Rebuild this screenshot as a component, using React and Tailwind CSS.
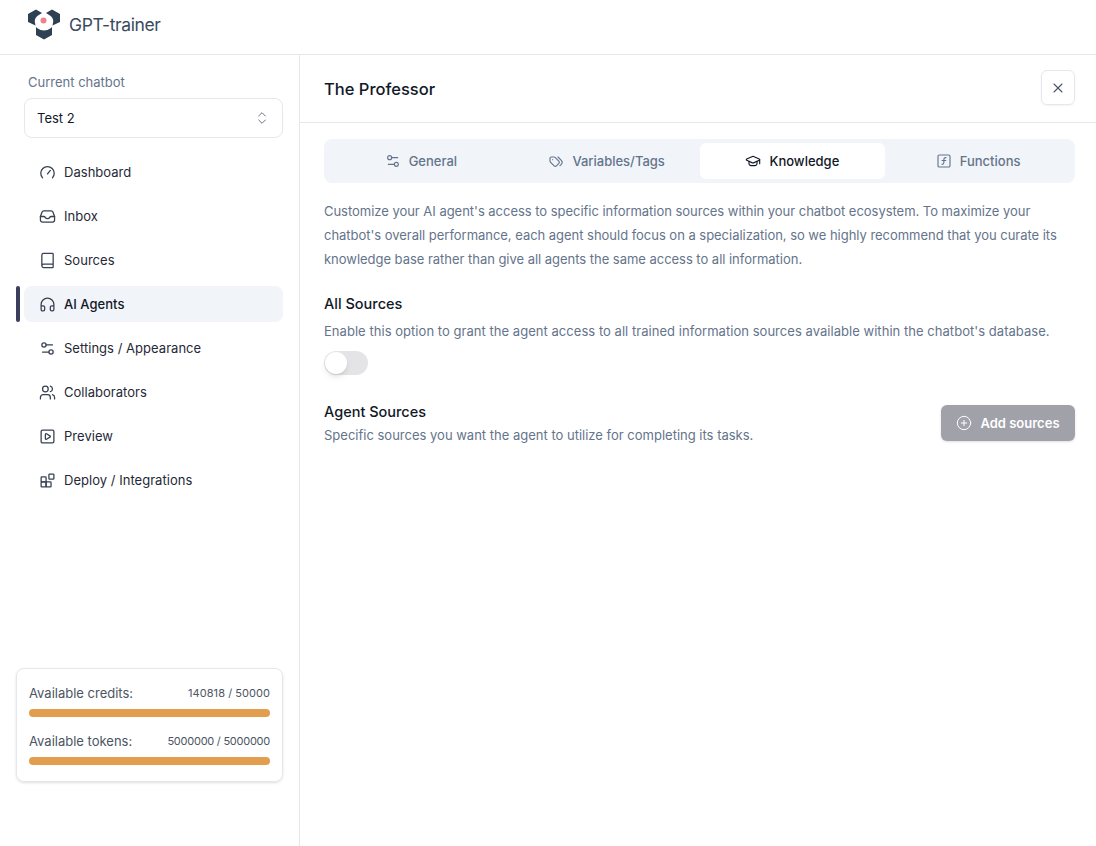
import React from 'react';
import { Book, ChevronsUpDown, CirclePlus, GraduationCap, Headphones, Settings2, SquareFunction, SquarePlay, Users, X } from 'lucide-react';

const Gauge = (props) => (
  <svg viewBox="0 0 24 24" fill="none" stroke="currentColor" strokeLinecap="round" strokeLinejoin="round" {...props}>
    <path d="M5 19.5A9.5 9.5 0 1 1 19 19.5" />
    <path d="M12 14l4-5" />
  </svg>
);

const InboxIcon = (props) => (
  <svg viewBox="0 0 24 24" fill="none" stroke="currentColor" strokeLinecap="round" strokeLinejoin="round" {...props}>
    <path d="M7 4h10a3 3 0 0 1 2.8 2L22 12v5a3 3 0 0 1-3 3H5a3 3 0 0 1-3-3v-5l2.2-6A3 3 0 0 1 7 4z" />
    <path d="M2 12h5c1 0 1.400.500 2 1.500s1.500 1.500 3 1.500 2.400-.500 3-1.500 1-1.500 2-1.500h5" />
  </svg>
);

const DeployIcon = (props) => (
  <svg viewBox="0 0 24 24" fill="none" stroke="currentColor" strokeLinecap="round" strokeLinejoin="round" {...props}>
    <rect x="3" y="7" width="7" height="7" rx="1" />
    <rect x="3" y="14" width="7" height="7" rx="1" />
    <rect x="10" y="14" width="7" height="7" rx="1" />
    <rect x="14" y="3" width="7" height="7" rx="1" />
  </svg>
);

const TagsIcon = (props) => (
  <svg viewBox="0 0 24 24" fill="none" stroke="currentColor" strokeLinecap="round" strokeLinejoin="round" {...props}>
    <path d="M3 8v4.172a2 2 0 0 0 .586 1.414l5.71 5.71a2.41 2.41 0 0 0 3.408 0l3.592-3.592a2.41 2.41 0 0 0 0-3.408l-5.71-5.71a2 2 0 0 0-1.414-.586H5a2 2 0 0 0-2 2z" />
    <path d="M18 19l1.592-1.592a4.82 4.82 0 0 0 0-6.816L15 6" />
    <path d="M7 10h-.01" />
  </svg>
);

const Logo = () => (
  <svg width="34" height="32" viewBox="0 0 34 32" className="shrink-0 mb-[6px]">
    <path d="M1 6L9 1.500L15 5L11 7.500Q7 10 8 15L8.500 17.500L1 14Z" fill="#2f3f54" />
    <path d="M33 6L25 1.500L19 5L23 7.500Q27 10 26 15L25.500 17.500L33 14Z" fill="#2f3f54" />
    <path d="M10 20Q17 25 24 20L25 19V27L17 31.500L9 27V19Z" fill="#2f3f54" />
    <circle cx="16.500" cy="12.500" r="3" fill="#f0808c" />
  </svg>
);

const navItems = [
  { label: 'Dashboard', icon: Gauge },
  { label: 'Inbox', icon: InboxIcon },
  { label: 'Sources', icon: Book },
  { label: 'AI Agents', icon: Headphones, active: true },
  { label: 'Settings / Appearance', icon: Settings2 },
  { label: 'Collaborators', icon: Users },
  { label: 'Preview', icon: SquarePlay },
  { label: 'Deploy / Integrations', icon: DeployIcon },
];

const tabs = [
  { label: 'General', icon: Settings2 },
  { label: 'Variables/Tags', icon: TagsIcon },
  { label: 'Knowledge', icon: GraduationCap, active: true },
  { label: 'Functions', icon: SquareFunction },
];

const Usage = ({ label, value, valueClass }) => (
  <div>
    <div className="flex items-center justify-between h-[18px] pt-px">
      <span className="text-[13px] text-[#4b5563]">{label}</span>
      <span className={`text-[11px] text-[#4b5563] ${valueClass}`}>{value}</span>
    </div>
    <div className="mt-[7px] h-2 rounded-full bg-[#e29d4f]" />
  </div>
);

const App = () => {
  return (
    <div className="w-[1096px] h-[846px] overflow-hidden bg-white text-[#111827] font-['Inter',sans-serif]">
      <header className="h-[55px] border-b border-[#e5e7eb] flex items-center gap-2 pl-[27px]">
        <Logo />
        <span className="mb-1 text-[17.5px] text-[#3a4a5e] tracking-[-0.4px]">GPT-trainer</span>
      </header>

      <div className="flex h-[791px]">
        <aside className="w-[300px] shrink-0 border-r border-[#e5e7eb] pl-4 pr-4 pt-[19px] flex flex-col">
          <div className="pl-3 text-[13px] leading-4 text-[#64748b]">Current chatbot</div>
          <div className="ml-2 mt-2 h-10 rounded-lg border border-[#e5e7eb] flex items-center justify-between pl-3 pr-3 text-[13px]">
            <span className="pt-px">Test 2</span>
            <ChevronsUpDown size={16} strokeWidth={1.5} className="text-[#6b7280]" />
          </div>

          <nav className="mt-4 flex flex-col gap-2">
            {navItems.map((item) => (
              <div key={item.label} className="relative h-9 ml-2">
                {item.active && <div className="absolute left-[-8px] top-0 h-9 w-1 rounded-full bg-[#3b3f5c]" />}
                <div className={`h-9 rounded-lg flex items-center gap-2 pl-[15px] text-[13px] ${item.active ? 'bg-[#f1f4f9] font-medium' : 'text-[#1f2937]'}`}>
                  <item.icon className="w-[17px] h-[17px] text-[#374151] shrink-0" strokeWidth={1.8} />
                  <span className="pt-[2px] tracking-[0.03px]">{item.label}</span>
                </div>
              </div>
            ))}
          </nav>

          <div className="mt-auto mb-[64px] rounded-lg border border-[#e5e7eb] shadow-sm px-3 pt-[15px] pb-4 flex flex-col gap-[15px]">
            <Usage label="Available credits:" value="140818 / 50000" valueClass="tracking-[0.05px]" />
            <Usage label="Available tokens:" value="5000000 / 5000000" valueClass="tracking-[-0.25px]" />
          </div>
        </aside>

        <main className="flex-1 min-w-0">
          <div className="h-[68px] border-b border-[#e5e7eb] flex items-center justify-between pl-6 pr-[21px]">
            <h1 className="mt-px text-[16.5px] font-medium text-[#111827]">The Professor</h1>
            <button className="mb-[2px] w-[34px] h-[35px] rounded-md border border-[#e5e7eb] shadow-xs flex items-center justify-center text-[#4b5563]">
              <X size={16} strokeWidth={1.6} />
            </button>
          </div>

          <div className="pl-6 pr-[21px] pt-4">
            <div className="h-11 rounded-lg bg-[#f1f4f9] grid grid-cols-4 items-center gap-0 px-1">
              {tabs.map((tab) => (
                <div key={tab.label} className={`h-9 rounded-md flex items-center justify-center gap-2 text-[13px] font-medium ${tab.active ? 'bg-white text-[#111827]' : 'text-[#64748b]'}`}>
                  <tab.icon className={`w-4 h-4 ${tab.active ? 'text-[#111827]' : 'text-[#64748b]'}`} strokeWidth={1.7} />
                  <span className="pt-px">{tab.label}</span>
                </div>
              ))}
            </div>

            <p className="mt-4 text-[13px] leading-6 text-[#64748b] tracking-[-0.03px]">
              Customize your AI agent's access to specific information sources within your chatbot ecosystem. To maximize your chatbot's overall performance, each agent should focus on a specialization, so we highly recommend that you curate its knowledge base rather than give all agents the same access to all information.
            </p>

            <h2 className="mt-[21px] text-[14.5px] leading-6 font-medium">All Sources</h2>
            <p className="mt-[5px] text-[13px] leading-5 text-[#64748b] tracking-[0.04px]">
              Enable this option to grant the agent access to all trained information sources available within the chatbot's database.
            </p>
            <div className="mt-[10px] w-11 h-6 rounded-full bg-[#e4e4e7] relative">
              <div className="absolute left-px top-px w-[22px] h-[22px] rounded-full bg-white shadow-md" />
            </div>

            <div className="mt-[21px] flex items-center justify-between h-[54px]">
              <div className="mb-0.5">
                <h2 className="text-[14.5px] leading-6 font-medium">Agent Sources</h2>
                <p className="mt-px text-[13px] leading-5 text-[#64748b]">Specific sources you want the agent to utilize for completing its tasks.</p>
              </div>
              <button className="w-[134px] h-9 rounded-md bg-[#a1a1aa] shadow-sm text-white text-[13px] font-semibold flex items-center justify-center gap-2">
                <CirclePlus size={16} strokeWidth={1.5} />
                <span className="pt-px">Add sources</span>
              </button>
            </div>
          </div>
        </main>
      </div>
    </div>
  );
};

export default App;
